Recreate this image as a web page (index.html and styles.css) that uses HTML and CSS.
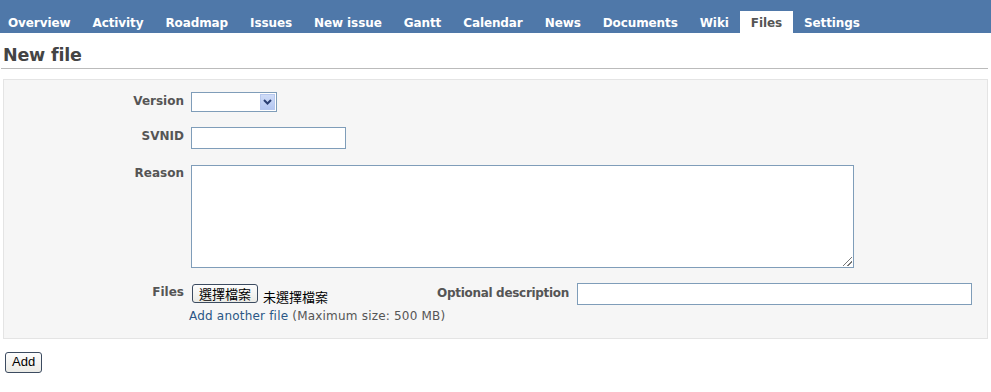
FILE: index.html
```html
<!DOCTYPE html>
<html>
<head>
<meta charset="utf-8">
<link rel="stylesheet" href="styles.css">
</head>
<body>
<div class="header">
  <ul class="menu">
    <li><a>Overview</a></li>
    <li><a>Activity</a></li>
    <li><a>Roadmap</a></li>
    <li><a>Issues</a></li>
    <li><a>New issue</a></li>
    <li><a>Gantt</a></li>
    <li><a>Calendar</a></li>
    <li><a>News</a></li>
    <li><a>Documents</a></li>
    <li><a>Wiki</a></li>
    <li class="active"><a>Files</a></li>
    <li><a>Settings</a></li>
  </ul>
</div>
<div class="content">
  <h2 class="title">New file</h2>
  <div class="box">
    <div class="row row-version">
      <label class="lbl">Version</label>
      <div class="select"><span class="arrow"><svg width="11" height="8" viewBox="0 0 11 8"><path d="M2 2 L5.5 5.5 L9 2" fill="none" stroke="#2b3f73" stroke-width="2"/></svg></span></div>
    </div>
    <div class="row row-svnid">
      <label class="lbl">SVNID</label>
      <input class="text svnid" type="text">
    </div>
    <div class="row row-reason">
      <label class="lbl">Reason</label>
      <div class="textarea"><span class="grip"></span></div>
    </div>
    <div class="row row-files">
      <label class="lbl">Files</label>
      <div class="files">
        <div class="fileline">
          <span class="filebtn">選擇檔案</span><span class="nofile">未選擇檔案</span>
        </div>
        <div class="addline"><a class="link">Add another file</a> <span class="max">(Maximum size: 500 MB)</span></div>
      </div>
      <label class="lbl2">Optional description</label>
      <input class="text desc" type="text">
    </div>
  </div>
  <div class="actions"><span class="btn">Add</span></div>
</div>
</body>
</html>
```
FILE: styles.css
```css
html, body { margin: 0; padding: 0; background: #fff; }
body { font-family: "DejaVu Sans", Verdana, sans-serif; font-size: 12px; color: #333; }

.header { background: #4f78a9; height: 33px; display: flex; align-items: flex-end; }
.menu { list-style: none; margin: 0; padding: 0; display: flex; height: 22px; }
.menu li { display: flex; align-items: center; }
.menu a { color: #fff; font-weight: bold; font-size: 12px; padding: 1px 11px 0; letter-spacing: -0.1px; white-space: nowrap; }
.menu li:first-child a { padding-left: 8px; }
.menu li.active { background: #fff; }
.menu li.active a { color: #555; }

.content { padding: 0 3px; }
.title { margin: 0 0 0 -2px; font-size: 17.5px; font-weight: bold; color: #444; padding: 12px 0 3px 2px; border-bottom: 1px solid #bbb; line-height: 20px; letter-spacing: -0.2px; }

.box { margin-top: 10px; background: #f6f6f6; border: 1px solid #e4e4e4; padding: 12px 0 15px 0; }
.row { display: flex; align-items: flex-start; }
.lbl { width: 187px; flex: none; text-align: right; font-weight: bold; color: #555; padding-right: 7px; box-sizing: border-box; white-space: nowrap; }
.row-version .lbl { padding-top: 2px; }
.row-svnid { margin-top: 15px; }
.row-svnid .lbl { padding-top: 2px; }
.row-reason { margin-top: 16px; }
.row-reason .lbl { padding-top: 1px; }
.row-files { margin-top: 15px; }
.row-files .lbl { padding-top: 2px; }

.select { width: 86px; height: 20px; box-sizing: border-box; border: 1px solid #7f9db9; background: #fff; position: relative; }
.arrow { position: absolute; right: 1px; top: 1px; width: 15px; height: 16px; background: linear-gradient(#cfdcf7, #b4c7f2); border: 1px solid #b7c8ee; box-sizing: border-box; display: flex; align-items: center; justify-content: center; }

.text { border: 1px solid #7f9db9; background: #fff; box-sizing: border-box; margin: 0; padding: 0; }
.svnid { width: 155px; height: 22px; }
.textarea { width: 663px; height: 103px; border: 1px solid #7f9db9; background: #fff; box-sizing: border-box; position: relative; }
.grip { position: absolute; right: 1px; bottom: 1px; width: 9px; height: 9px; background: linear-gradient(135deg, transparent 45%, #777 45%, #777 55%, transparent 55%, transparent 72%, #777 72%, #777 80%, transparent 80%); }

.files { width: 246px; flex: none; white-space: nowrap; }
.fileline { display: flex; align-items: flex-start; height: 22px; margin-left: 1px; }
.filebtn { font-family: "Noto Sans CJK TC", sans-serif; font-size: 13px; color: #000; height: 19px; line-height: 17px; box-sizing: border-box; border: 1px solid #3c4b60; border-radius: 3px; background: linear-gradient(#fdfdfd, #ebebe6); padding: 0 6px; margin-top: 1px; }
.nofile { font-family: "Noto Sans CJK TC", sans-serif; font-size: 13px; color: #000; margin-left: 5px; margin-top: 5px; line-height: 17px; }
.addline { margin-top: 4px; margin-left: -2px; color: #555; letter-spacing: 0.2px; }
.link { color: #2a5685; }
.max { color: #555; }
.lbl2 { width: 140px; flex: none; white-space: nowrap; text-align: right; font-weight: bold; color: #555; padding-right: 8px; box-sizing: border-box; padding-top: 3px; letter-spacing: -0.3px; }
.desc { width: 395px; height: 22px; }

.actions { padding: 13px 0 0 2px; }
.btn { display: inline-block; font-family: "Liberation Sans", Arial, sans-serif; font-size: 13px; color: #000; border: 1px solid #3c4b60; border-radius: 3px; background: linear-gradient(#fdfdfd, #ebebe6); padding: 1px 6px 2px; line-height: 16px; }
```
